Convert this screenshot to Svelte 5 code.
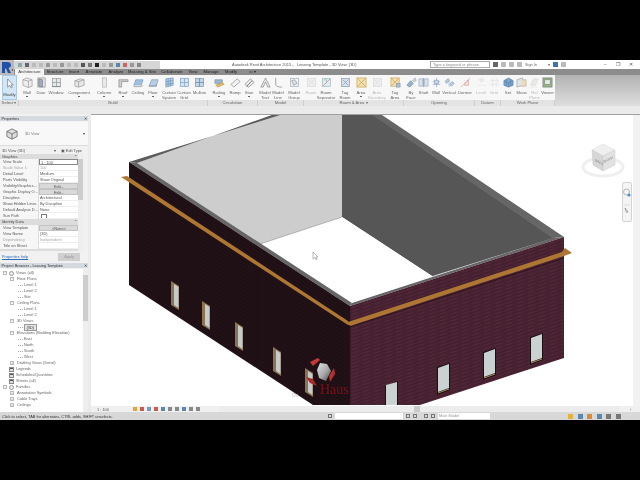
<script>
  const S = 'stroke-width=".7"';
  const box = (x, y, w, h, f, s = '#777') => `<rect x="${x}" y="${y}" width="${w}" height="${h}" fill="${f}" stroke="${s}" ${S}/>`;
  const p = (d, f = 'none', s = '#777') => `<path d="${d}" fill="${f}" stroke="${s}" ${S}/>`;
  const icons = {
    cursor: p('M4 1V10L6 8L8 11L9 10L7.500 7.500H10Z', '#fff', '#667'),
    wall: p('M1 3L5 1L11 3V10L7 11.500L1 9Z', '#eee') + p('M7 4.500V11.500M1 3L7 4.500L11 3'),
    door: box(2, 1, 8, 10, '#ddd') + p('M3 2L7 3V11L3 10Z', '#8b9bb0', '#556') ,
    window: box(1.500, 1.500, 9, 9, '#dfe5ea') + p('M6 1.500V10.500M1.500 6H10.500') + p('M1 10.500H11', 'none', '#555'),
    comp: p('M1 4L7 2L11 3V9L5 11L1 10Z', '#e5e5e5') + p('M5 5V11M1 4L5 5L11 3'),
    column: box(4, 1, 4, 10, '#e8e8e8', '#999'),
    roof: p('M1 11V3H11V5H4V11Z', '#c8c8c8', '#666'),
    ceiling: p('M1 9L3 3H11L9 9Z', '#8db4d9', '#5a7fa5') + p('M1 9V10.500H9L11 9', '#d5dfe8', '#777'),
    floor: p('M1 10L4 3H11L9 10Z', '#a7c3e0', '#5a7fa5') + p('M1 10H9V8', 'none', '#777'),
    csys: p('M2 2L10 1V9L2 11Z', '#a9c9e6', '#3f74a6') + p('M4.500 2V10M7 1.500V10M2 5L10 4M2 8L10 7', 'none', '#3f74a6'),
    cgrid: box(1.500, 1.500, 9, 9, '#cfe0f0', '#5a87b0') + p('M6 1.500V10.500M1.500 6H10.500', 'none', '#5a87b0'),
    mullion: box(1.500, 1.500, 9, 9, '#b8d0e6', '#4b7aa6') + p('M6 1.500V10.500M1.500 6H10.500', 'none', '#2f5e8a'),
    railing: p('M1 3H9V7H1Z', '#8aa9c8', '#55708c') + p('M2 9L9 6L11 8L4 11Z', '#e2b33e', '#9c7a22'),
    ramp: p('M1 8L8 2L11 5L4 11Z', '#f2f2f2', '#666'),
    stair: p('M1 8L7 2L9 4L3 10ZM3 10L9 4L11 6L5 11Z', '#efefef', '#555'),
    mtext: p('M1 11L6 1L11 11H8.500L6 5.500L3.500 11Z', '#e6e6e6', '#666'),
    mline: p('M3 1V8C3 10 5 11 10 11', 'none', '#555'),
    mgroup: box(1.500, 1.500, 9, 9, '#f0f0f0', '#8a9aa8') + p('M3 4L6 3L9 7L5 9Z', '#d5dbe0'),
    roomOff: box(1.500, 1.500, 9, 9, '#ececec', '#d0d0d0') + p('M3 3L9 9M9 3L3 9', 'none', '#d5d5d5'),
    roomsep: box(1.500, 1.500, 9, 9, '#dfe9f2', '#8aa') + p('M2 10L10 2', 'none', '#d9534f') + p('M3 3H6V6', 'none', '#7a9'),
    tagroom: box(1.500, 1.500, 9, 9, '#cddbe8', '#68829c') + p('M3 3L9 9M9 3L3 9', 'none', '#68829c'),
    area: box(1, 1, 10, 10, '#f2d99a', '#bd9128') + p('M1 1L11 11M11 1L1 11', 'none', '#bd9128'),
    tagarea: box(1, 1, 9, 9, '#f2d99a', '#bd9128') + p('M1 1L10 10M10 1L1 10', 'none', '#bd9128') + box(7, 7, 4, 4, '#9db4c9', '#68829c'),
    face: p('M1 9L5 4L8 7L4 11Z', '#7ea3c7', '#56708a') + p('M7 4L10 1L11 4L9 5Z', '#c9d3dc', '#889'),
    shaft: p('M1 2H5V10H1ZM7 2H11V10H7Z', '#d5deea', '#7d94ad') + p('M6 1V11', 'none', '#3f74a6'),
    vwall: p('M6 1V11M2 5H10M2 8H10', 'none', '#6f8fb0') + box(4, 3.500, 4, 4, '#bcd0e4', '#6f8fb0'),
    vert: p('M1 5L4 2L6 4L3 7ZM6 8L9 5L11 7L8 10Z', '#a8c2da', '#6485a3') + p('M5.500 1V11', 'none', '#9ab'),
    dormer: p('M1 11L9 3L11 1', 'none', '#d98a7a') + p('M5 8L9 3V9H5Z', '#f5eeee', '#c66'),
    level: p('M3 3L6 1L9 3L6 6Z', '#e7e7e7', '#ddd') + p('M1 9H11', 'none', '#e2e2e2'),
    grid: p('M1 4H11M1 8H11M4 1V11M8 1V11', 'none', '#dcdcdc'),
    set: p('M6 1L11 4V9L6 11L1 9V4Z', '#5d93c5', '#2f6395') + p('M1 4L6 6.500L11 4M6 6.500V11M3.500 2.500V10M8.500 2.500V10', 'none', '#2f6395'),
    show: p('M1 3L7 1V9L1 11Z', '#d8e2ea', '#789') + p('M7 3H11V10H5', '#e9d9a6', '#a98'),
    ref: p('M2 9L5 2H10L7 9Z', '#e6e6e6', '#d0d0d0') + p('M1 11H9', 'none', '#ddd'),
    viewer: box(1, 1, 10, 10, '#7fa36f', '#4f5f4a') + box(3, 3, 6, 5, '#dfe8d8', '#5f6f5a')
  };

  const panels = [
    { name: 'Select ▾', w: 19, tools: [] },
    { name: 'Build', w: 189, tools: [
      ['Wall', 16, 'wall', 1], ['Door', 12, 'door'], ['Window', 18, 'window'], ['Component', 28, 'comp', 1], ['Column', 22, 'column', 1],
      ['Roof', 16, 'roof', 1], ['Ceiling', 14, 'ceiling'], ['Floor', 16, 'floor', 1], ['Curtain|System', 16, 'csys'], ['Curtain|Grid', 14, 'cgrid'], ['Mullion', 17, 'mullion'] ] },
    { name: 'Circulation', w: 50, tools: [['Railing', 22, 'railing', 1], ['Ramp', 10, 'ramp'], ['Stair', 18, 'stair', 1]] },
    { name: 'Model', w: 46, tools: [['Model|Text', 14, 'mtext'], ['Model|Line', 12, 'mline'], ['Model|Group', 20, 'mgroup', 1]] },
    { name: 'Room & Area ▾', w: 100, tools: [
      ['Room', 14, 'roomOff', 0, 1], ['Room|Separator', 16, 'roomsep'], ['Tag|Room', 22, 'tagroom', 1], ['Area', 10, 'area', 1], ['Area|Boundary', 22, 'roomOff', 0, 1], ['Tag|Area', 14, 'tagarea', 1] ] },
    { name: 'Opening', w: 71, tools: [['By|Face', 14, 'face'], ['Shaft', 11, 'shaft'], ['Wall', 14, 'vwall'], ['Vertical', 12, 'vert'], ['Dormer', 20, 'dormer']] },
    { name: 'Datum', w: 26, tools: [['Level', 12, 'level', 0, 1], ['Grid', 14, 'grid', 0, 1]] },
    { name: 'Work Plane', w: 54, tools: [['Set', 14, 'set'], ['Show', 13, 'show'], ['Ref|Plane', 13, 'ref', 0, 1], ['Viewer', 13, 'viewer']] }
  ];

  const tabs = [['Architecture', 29], ['Structure', 22], ['Insert', 16], ['Annotate', 24], ['Analyze', 20], ['Massing & Site', 32], ['Collaborate', 28], ['View', 14], ['Manage', 22], ['Modify', 18], ['▭ ▾', 25]];

  const props = [
    ['h', 'Graphics'], ['r', 'View Scale', '1 : 100', 'box'], ['r', 'Scale Value    1:', '100', 'dim'], ['r', 'Detail Level', 'Medium'], ['r', 'Parts Visibility', 'Show Original'],
    ['r', 'Visibility/Graphics...', 'Edit...', 'btn'], ['r', 'Graphic Display O...', 'Edit...', 'btn'], ['r', 'Discipline', 'Architectural'], ['r', 'Show Hidden Lines', 'By Discipline'],
    ['r', 'Default Analysis D...', 'None'], ['r', 'Sun Path', '', 'chk'], ['h', 'Identity Data'], ['r', 'View Template', '<None>', 'btn'], ['r', 'View Name', '{3D}'], ['r', 'Dependency', 'Independent', 'dim'], ['r', 'Title on Sheet', '']
  ];

  const tree = [
    [3, 'Views (all)', 'minus', 'eye'], [10, 'Floor Plans', 'minus'], [23, 'Level 1'], [23, 'Level 2'], [23, 'Site'], [10, 'Ceiling Plans', 'minus'], [23, 'Level 1'], [23, 'Level 2'],
    [10, '3D Views', 'minus'], [23, '{3D}', '', 'sel'], [10, 'Elevations (Building Elevation)', 'minus'], [23, 'East'], [23, 'North'], [23, 'South'], [23, 'West'], [10, 'Drafting Views (Detail)', 'plus'],
    [3, 'Legends', '', 'sheet'], [3, 'Schedules/Quantities', '', 'sheet'], [3, 'Sheets (all)', '', 'sheet'], [3, 'Families', 'minus', 'eye'], [10, 'Annotation Symbols', 'plus'], [10, 'Cable Trays', 'plus'], [10, 'Ceilings', 'plus']
  ];

  const leftWindows = [[171, 281], [202, 301], [235, 322], [273, 347], [305, 368]];
  const rightWindows = [[438, 368], [484, 353], [531, 338]];
  const qat = ['#8aa', '#667', '#bbb', '#bbb', '#999', '#bbb', '#999', '#bbb', '#bbb', '#555', '#777', '#222', '#bbb', '#999', '#5a87b0', '#c66', '#999', '#888'];
  const viewIcons = ['#d9a93a', '#c95b4a', '#7a9cbc', '#c95b4a', '#5a87b0', '#888', '#888', '#5a87b0', '#888', '#888'];
  const statusIcons = ['#e2b33e', '#5a87b0', '#d98a3a', '#5a87b0', '#777', '#777'];
</script>

<div class="app">
  <div class="letterbox"></div>
  <div class="screen">
    <header class="head">
      <div class="logo">
        <svg viewBox="0 0 14 15" width="14" height="15"><path d="M2 13V2H7.500C10 2 11 3.500 11 5C11 6.500 10 7.500 8.500 8L11 13H8L6 8.500H5V13Z" fill="#1f4fa8"/><circle cx="12.500" cy="10" r=".7" fill="#333"/></svg>
      </div>
      <div class="headrest">
        <div class="titlebar">
          <div class="qat">
            {#each qat as c}<i style:background={c}></i>{/each}
          </div>
          <div class="title">Autodesk Revit Architecture 2015 -&nbsp;&nbsp; Leasing Template - 3D View: &#123;3D&#125;</div>
          <div class="search">Type a keyword or phrase</div>
          <div class="infos">
            <i class="dk"></i><i></i><i></i><i></i>
            <span>Sign In</span><b>▾</b><i class="bl"></i><i></i>
          </div>
          <div class="winbtns"><span>–</span><span>❐</span><span>✕</span></div>
        </div>
        <nav class="tabs">
          {#each tabs as t, n}
            <div class="tab" class:active={n === 0} style:width="{t[1]}px">{t[0]}</div>
          {/each}
        </nav>
      </div>
    </header>

    <div class="ribbon">
      <div class="panels">
        {#each panels as pn}
          <section class="panel" style:width="{pn.w}px">
            <div class="tools">
              {#if pn.tools.length === 0}
                <div class="modify">
                  <svg viewBox="0 0 12 12" width="11" height="11">{@html icons.cursor}</svg>
                  <span>Modify</span>
                </div>
              {/if}
              {#each pn.tools as t}
                <div class="tool" class:off={t[4]} style:width="{t[1]}px">
                  <svg viewBox="0 0 12 12" width="11" height="11">{@html icons[t[2]]}</svg>
                  {#each t[0].split('|') as line}<span>{line}</span>{/each}
                  {#if t[3]}<em></em>{/if}
                </div>
              {/each}
            </div>
            <div class="plabel">{pn.name}</div>
          </section>
        {/each}
      </div>
      <div class="ribbonfill"></div>
    </div>
    <div class="band"></div>

    <div class="main">
      <aside class="side">
        <div class="phead"><span>Properties</span><b>✕</b></div>
        <div class="typesel">
          <svg viewBox="0 0 14 14" width="12" height="12"><path d="M7 1L13 4V10L7 13L1 10V4Z" fill="#dcdcdc" stroke="#555" stroke-width=".8"/><path d="M1 4L7 7L13 4M7 7V13" fill="none" stroke="#555" stroke-width=".8"/></svg>
          <span>3D View</span><b>▾</b>
        </div>
        <div class="selrow"><span class="selbox">3D View (3D)<b>▾</b></span><span class="edit">▣ Edit Type</span></div>
        <div class="ptable">
          <div class="pgrid">
            {#each props as r}
              {#if r[0] === 'h'}
                <div class="phdr"><span>{r[1]}</span><b>⌃</b></div>
              {:else}
                <div class="prow" class:dimmed={r[3] === 'dim'}>
                  <span class="pk">{r[1]}</span>
                  <span class="pv {r[3] ?? ''}">{#if r[3] === 'chk'}<u></u>{:else}{r[2]}{/if}</span>
                </div>
              {/if}
            {/each}
            <div class="phdr cut"></div>
          </div>
          <div class="scroll"><div class="thumb pthumb"></div></div>
        </div>
        <div class="helprow"><a href="#help">Properties help</a><span class="apply">Apply</span></div>

        <div class="phead browser"><span>Project Browser - Leasing Template</span><b>✕</b></div>
        <div class="treewrap">
          <div class="tree">
            {#each tree as n}
              <div class="node" class:leaf={n[0] === 23} style:padding-left="{n[0]}px">
                {#if n[2]}<i class="tog">{n[2] === 'minus' ? '−' : '+'}</i>{/if}
                {#if n[3] === 'eye'}<i class="ico eye"></i>{/if}
                {#if n[3] === 'sheet'}<i class="tog none"></i><i class="ico sheet"></i>{/if}
                <span class:sel={n[3] === 'sel'}>{n[1]}</span>
              </div>
            {/each}
          </div>
          <div class="scroll wide"><div class="thumb tthumb"></div></div>
        </div>
      </aside>

      <div class="canvascol">
        <div class="canvasrow">
          <svg class="view" viewBox="91 115 542 291" width="542" height="291">
            <defs>
              <pattern id="brickR" width="11" height="3.500" patternUnits="userSpaceOnUse" patternTransform="skewY(-18)">
                <rect width="11" height="3.500" fill="#4a2333"/>
                <path d="M0 .5H11" stroke="#401d2c" stroke-width=".8"/>
                <path d="M0 2.200H6" stroke="#552939" stroke-width=".8"/>
                <path d="M7 2.800H11" stroke="#45202f" stroke-width=".7"/>
              </pattern>
              <pattern id="brickL" width="12" height="4" patternUnits="userSpaceOnUse" patternTransform="skewY(33)">
                <rect width="12" height="4" fill="#1f1015"/>
                <path d="M0 .5H12" stroke="#25151a" stroke-width=".6"/>
                <path d="M0 2.500H7" stroke="#1b0d11" stroke-width=".6"/>
              </pattern>
              <linearGradient id="ball" x1="0" y1="0" x2="1" y2="1">
                <stop offset="0" stop-color="#e4e4e4"/><stop offset=".55" stop-color="#a8a8a8"/><stop offset="1" stop-color="#444"/>
              </linearGradient>
            </defs>

            <!-- light inner wall, dark inner wall, floor -->
            <polygon points="137,163 272,115 342,115 342,217 260,244" fill="#cdcdcd"/>
            <polygon points="342,115 373,115 553,238 432,276 342,217" fill="#565656"/>
            <polygon points="260,244 342,217 432,276 352,303" fill="#ffffff"/>
            <path d="M260 244L342 217" stroke="#888" stroke-width=".6"/>

            <!-- rim -->
            <polygon points="129,162 280,115 272,115 137,163" fill="#5c5c5c"/>
            <polygon points="373,115 382,115 564,237 553,238" fill="#666666"/>
            <polygon points="129,162 137,163 352,303 350,306" fill="#666668"/>
            <polygon points="553,238 564,237 350,306 352,303" fill="#666666"/>
            <path d="M373 115L553 238L432 276" fill="none" stroke="#444" stroke-width=".5"/>

            <!-- outer walls -->
            <polygon points="129,162 350,306 350,405 313,405 129,285" fill="url(#brickL)"/>
            <polygon points="350,306 564,237 564,358 420,405 350,405" fill="url(#brickR)"/>
            <path d="M350 306V405" stroke="#2a1520" stroke-width=".6"/>

            <!-- trim band -->
            <polygon points="121,177 127,176 348,321 350,325 348,325" fill="#ad7632"/>
            <polygon points="348,322 562,252 565,248 572,253 564,256 350,326" fill="#ad7632"/>
            <path d="M350 327L564 258" stroke="#2c1019" stroke-width=".8"/>

            {#each leftWindows as w}
              <polygon points="{w[0]},{w[1]} {w[0] + 8},{w[1] + 5} {w[0] + 8},{w[1] + 29} {w[0]},{w[1] + 24}" fill="#8d7350"/>
              <polygon points="{w[0] + 3},{w[1] + 3} {w[0] + 7.500},{w[1] + 6} {w[0] + 7.500},{w[1] + 27} {w[0] + 3},{w[1] + 24}" fill="#c6ccce"/>
            {/each}
            {#each rightWindows as w}
              <polygon points="{w[0] - 1},{w[1] - 1} {w[0] + 12},{w[1] - 5} {w[0] + 12},{w[1] + 22} {w[0] - 1},{w[1] + 27}" fill="#1c0e13"/>
              <polygon points="{w[0]},{w[1]} {w[0] + 11},{w[1] - 4} {w[0] + 11},{w[1] + 20} {w[0]},{w[1] + 24}" fill="#c9d2d0"/>
              <path d="M{w[0]} {w[1] + 25}L{w[0] + 11} {w[1] + 21}" stroke="#a68f63" stroke-width="1"/>
            {/each}
            <polygon points="385,386 398,381 398,405 385,405" fill="#1c0e13"/>
            <polygon points="386,385 397,382 397,405 386,405" fill="#c9d2d0"/>

            <!-- watermark -->
            <polygon points="320,363 327,364 331,371 326,381 319,378 317,370" fill="url(#ball)"/>
            <polygon points="310,362 318,358 320,360 313,366" fill="#c43a3a"/>
            <polygon points="334,368 335,374 330,382 329,376" fill="#b52f2f"/>
            <polygon points="306,377 313,379 317,386 310,383" fill="#a82a2a"/>
            <text x="320" y="394" class="haus">Haus</text>
            <text x="292" y="397" class="dx">Dx</text>

            <!-- pointer -->
            <path d="M313 252V259L315 257.500L316.500 260L317 259.500L316 257H318Z" fill="#fff" stroke="#8a8a8a" stroke-width=".6"/>

            <!-- view cube -->
            <ellipse cx="603" cy="167" rx="20" ry="9" fill="none" stroke="#efefef" stroke-width="3"/>
            <polygon points="592,150 603,144 615,150 603,156" fill="#efefef" stroke="#d4d4d4" stroke-width=".4"/>
            <polygon points="592,150 603,156 603,171 593,165" fill="#d6d6d6" stroke="#c0c0c0" stroke-width=".4"/>
            <polygon points="603,156 615,150 615,165 603,171" fill="#e2e2e2" stroke="#c4c4c4" stroke-width=".4"/>
            <text x="594.500" y="161" class="cube" transform="rotate(28 594.500 161)">BACK</text>
            <text x="604" y="163" class="cube" transform="rotate(-25 604 163)">RIGHT</text>

            <!-- navigation bar -->
            <rect x="622.500" y="182.500" width="9" height="39" rx="1.500" fill="#f4f4f4" stroke="#c4c4c4" stroke-width=".7"/>
            <circle cx="626.500" cy="192" r="3" fill="none" stroke="#999" stroke-width=".7"/>
            <circle cx="629" cy="195" r="1.600" fill="#4d8fcc"/>
            <path d="M624 205H630" stroke="#ccc" stroke-width=".6"/>
            <path d="M625 208L628 212L626.500 212.500Z" fill="none" stroke="#888" stroke-width=".7"/>
          </svg>
          <div class="gutter"></div>
        </div>
        <div class="viewbar">
          <span class="scale">1 : 100</span>
          <div class="vicons">{#each viewIcons as c}<i style:background={c}></i>{/each}</div>
          <div class="hscroll"><div class="hthumb"></div></div>
          <b>›</b>
        </div>
      </div>
    </div>

    <footer class="status">
      <span class="hint">Click to select, TAB for alternates, CTRL adds, SHIFT unselects.</span>
      <i class="sq gap1"></i>
      <span class="field f1"></span>
      <i class="sq"></i><i class="sq"></i>
      <i class="sq gap2"></i><i class="sq"></i>
      <span class="field f2">Main Model</span>
      <div class="sicons">{#each statusIcons as c}<i style:background={c}></i>{/each}</div>
    </footer>
  </div>
  <div class="letterbox"></div>
</div>

<style>
  :global(body) { margin: 0; background: #000; }
  .app {
    width: 640px; height: 480px; background: #000; display: flex; flex-direction: column; overflow: hidden;
    font-family: "Liberation Sans", Arial, sans-serif; font-size: 3.9px; color: #444; filter: blur(.3px);
  }
  .letterbox { height: 60px; flex: none; background: #000; }
  .screen { height: 360px; flex: none; display: flex; flex-direction: column; background: #eaeaea; }
  i { display: block; font-style: normal; }

  .head { display: flex; height: 15px; flex: none; }
  .logo { width: 14px; background: #b9b9b9; flex: none; }
  .logo svg { display: block; }
  .headrest { flex: 1; display: flex; flex-direction: column; }
  .titlebar { height: 9px; display: flex; align-items: center; background: #fff; }
  .qat { width: 146px; height: 8px; background: #d6d6d6; display: flex; align-items: center; gap: 3px; padding-left: 4px; box-sizing: border-box; flex: none; }
  .qat i { width: 4px; height: 4px; }
  .title { margin-left: 72px; width: 198px; flex: none; white-space: nowrap; color: #555; font-size: 4px; }
  .search { width: 60px; height: 7px; line-height: 6px; box-sizing: border-box; border: .5px solid #aaa; padding-left: 2px; color: #888; background: #fff; flex: none; font-size: 4px; }
  .infos { width: 92px; display: flex; gap: 3px; align-items: center; padding-left: 3px; box-sizing: border-box; flex: none; color: #666; }
  .infos i { width: 5px; height: 5px; background: #bbb; }
  .infos i.dk { background: #666; }
  .infos i.bl { background: #3f74a6; }
  .infos b { font-weight: normal; margin-left: 8px; }
  .winbtns { flex: 1; display: flex; justify-content: space-between; padding: 0 7px 0 22px; color: #555; font-size: 4.5px; }
  .tabs { height: 6px; background: #8c8c8c; display: flex; padding-left: 1px; color: #1e1e1e; font-size: 4.2px; }
  .tab { text-align: center; line-height: 6px; white-space: nowrap; flex: none; }
  .tab.active { background: #f4f4f4; color: #333; }

  .ribbon { display: flex; height: 31px; flex: none; font-size: 4.2px; }
  .panels { display: flex; flex: none; width: 555px; }
  .panel { display: flex; flex-direction: column; flex: none; }
  .tools { height: 25px; background: #f7f7f7; display: flex; flex: none; }
  .modify { width: 15px; margin-left: 2px; background: #d3e6f5; border: .5px solid #a9c9e4; box-sizing: border-box; display: flex; flex-direction: column; align-items: center; padding-top: 2px; color: #444; }
  .modify span { margin-top: 3px; line-height: 5px; }
  .tool { display: flex; flex-direction: column; align-items: center; flex: none; padding-top: 2px; box-sizing: border-box; color: #666; }
  .tool.off { color: #bcbcbc; }
  .tool span { line-height: 5px; white-space: nowrap; }
  .tool svg { margin-bottom: 2px; flex: none; opacity: .8; }
  .tool em { width: 1.500px; height: 1px; background: #666; margin-top: 1px; }
  .plabel { height: 6px; line-height: 6px; text-align: center; background: #e3e3e3; color: #666; border-right: .5px solid #cfcfcf; white-space: nowrap; }
  .ribbonfill { flex: 1; background: linear-gradient(#b2b2b2, #dedede); }
  .band { height: 8px; flex: none; background: #ebebeb; }

  .main { height: 298px; flex: none; display: flex; gap: 3px; }
  .side { width: 88px; flex: none; display: flex; flex-direction: column; padding-top: 2px; box-sizing: border-box; background: #f1f1f1; }
  .phead { height: 5px; line-height: 5px; display: flex; justify-content: space-between; padding: 0 1.500px 0 1.500px; background: #d5dae0; color: #333; flex: none; }
  .phead b { font-weight: normal; font-size: 4px; }
  .typesel { height: 24px; margin: 1px 0 0; display: flex; align-items: center; background: #f8f8f8; border-bottom: .5px solid #ddd; flex: none; padding-left: 6px; box-sizing: border-box; }
  .typesel span { margin-left: 7px; flex: 1; color: #777; }
  .typesel b { margin-right: 3px; font-weight: normal; }
  .selrow { height: 8px; display: flex; align-items: center; flex: none; justify-content: space-between; padding: 0 6px 0 2px; }
  .selbox { width: 54px; display: flex; justify-content: space-between; color: #555; }
  .selbox b { font-weight: normal; }
  .edit { color: #555; }
  .ptable { height: 97px; display: flex; flex: none; width: 83px; overflow: hidden; }
  .pgrid { width: 78px; flex: none; background: #fff; overflow: hidden; }
  .phdr { height: 5px; line-height: 5px; background: #dcdcdc; padding: 0 1px 0 2px; display: flex; justify-content: space-between; color: #444; }
  .phdr:nth-child(12) { height: 6px; line-height: 6px; }
  .phdr.cut { height: 3px; }
  .phdr b { font-weight: normal; }
  .prow { height: 6px; line-height: 6px; display: grid; grid-template-columns: 39px 39px; }
  .pk { padding-left: 3px; background: #f6f6f6; white-space: nowrap; overflow: hidden; border-right: .5px solid #ddd; box-sizing: border-box; color: #555; }
  .pv { padding-left: 1px; white-space: nowrap; overflow: hidden; display: block; border-bottom: .5px solid #eee; box-sizing: border-box; color: #555; }
  .dimmed span { color: #a5a5a5; }
  .pv.box { border: .5px solid #888; background: #fff; }
  .pv.btn { background: #d9d9d9; text-align: center; border: .5px solid #c4c4c4; }
  .pv u { display: block; width: 4px; height: 4px; border: .5px solid #777; margin: .5px 0 0 1px; background: #fff; }
  .scroll { width: 5px; flex: none; background: #eee; }
  .thumb { background: #cdcdcd; width: 100%; }
  .pthumb { margin-top: 5px; height: 41px; }
  .tthumb { margin-top: 6px; height: 46px; }
  .helprow { height: 11px; display: flex; align-items: center; justify-content: space-between; flex: none; padding: 0 8px 0 2px; }
  .helprow a { color: #2a6db5; text-decoration: underline; }
  .apply { width: 22px; height: 8px; line-height: 8px; text-align: center; background: #cfcfcf; color: #9a9a9a; }
  .browser { margin-top: 1px; }
  .treewrap { flex: 1; display: flex; min-height: 0; background: #fff; margin-top: 1px; overflow: hidden; }
  .tree { flex: 1; padding-top: 1px; background: #fff; }
  .node { height: 6px; line-height: 6px; display: flex; align-items: center; white-space: nowrap; color: #666; box-sizing: border-box; }
  .node.leaf::before { content: ""; width: 5px; border-top: .5px dotted #aaa; margin-left: -5px; }
  .node > span { margin-left: 1px; }
  .tog { width: 4px; height: 4px; border: .5px solid #bbb; line-height: 3px; text-align: center; font-size: 3.500px; color: #888; margin-right: 2px; box-sizing: border-box; flex: none; background: #fff; }
  .tog.none { border-color: transparent; background: none; }
  .ico { width: 5px; height: 5px; margin-right: 1px; flex: none; box-sizing: border-box; }
  .eye { border: .5px solid #999; border-radius: 50%; background: #eee; }
  .sheet { background: linear-gradient(#555 40%, #ddd 40%); border: .5px solid #888; }
  .sel { border: .5px solid #999; background: #e6e6e6; padding: 0 1.500px; line-height: 5px; color: #333; }

  .canvascol { flex: 1; display: flex; flex-direction: column; min-width: 0; }
  .canvasrow { height: 292px; display: flex; flex: none; border-top: 1px solid #a0a0a0; box-sizing: border-box; }
  .view { display: block; flex: none; background: #fff; }
  .gutter { flex: 1; background: #f2f2f2; }
  .haus { font-family: "Liberation Serif", serif; font-size: 14px; fill: #7c1016; }
  .dx { font-size: 5px; fill: #c4c4c4; }
  .cube { font-size: 3.500px; fill: #888; }
  .viewbar { height: 6px; flex: none; display: flex; align-items: center; background: #f0f0f0; color: #555; padding-left: 6px; }
  .scale { width: 36px; flex: none; }
  .vicons { display: flex; gap: 3px; width: 78px; flex: none; }
  .vicons i { width: 4px; height: 4px; }
  .hscroll { width: 400px; margin-left: 8px; height: 6px; background: #ececec; flex: none; display: flex; }
  .hthumb { width: 6px; margin-left: 195px; background: #c9c9c9; }
  .viewbar b { margin-left: 11px; font-weight: normal; }
  .status { height: 8px; flex: none; display: flex; align-items: center; background: #d8d8d8; color: #333; padding-left: 2px; }
  .hint { width: 323px; flex: none; white-space: nowrap; }
  .sq { width: 4px; height: 4px; border: .5px solid #777; flex: none; box-sizing: border-box; margin-right: 3px; }
  .gap1 { margin-right: 3px; margin-left: 3px; }
  .gap2 { margin-left: 4px; }
  .field { height: 6px; line-height: 6px; background: #fff; flex: none; color: #999; padding-left: 1px; box-sizing: border-box; }
  .f1 { width: 68px; margin-right: 3px; }
  .f2 { width: 52px; }
  .sicons { display: flex; gap: 4.500px; margin-left: 78px; }
  .sicons i { width: 5px; height: 5px; }
</style>
